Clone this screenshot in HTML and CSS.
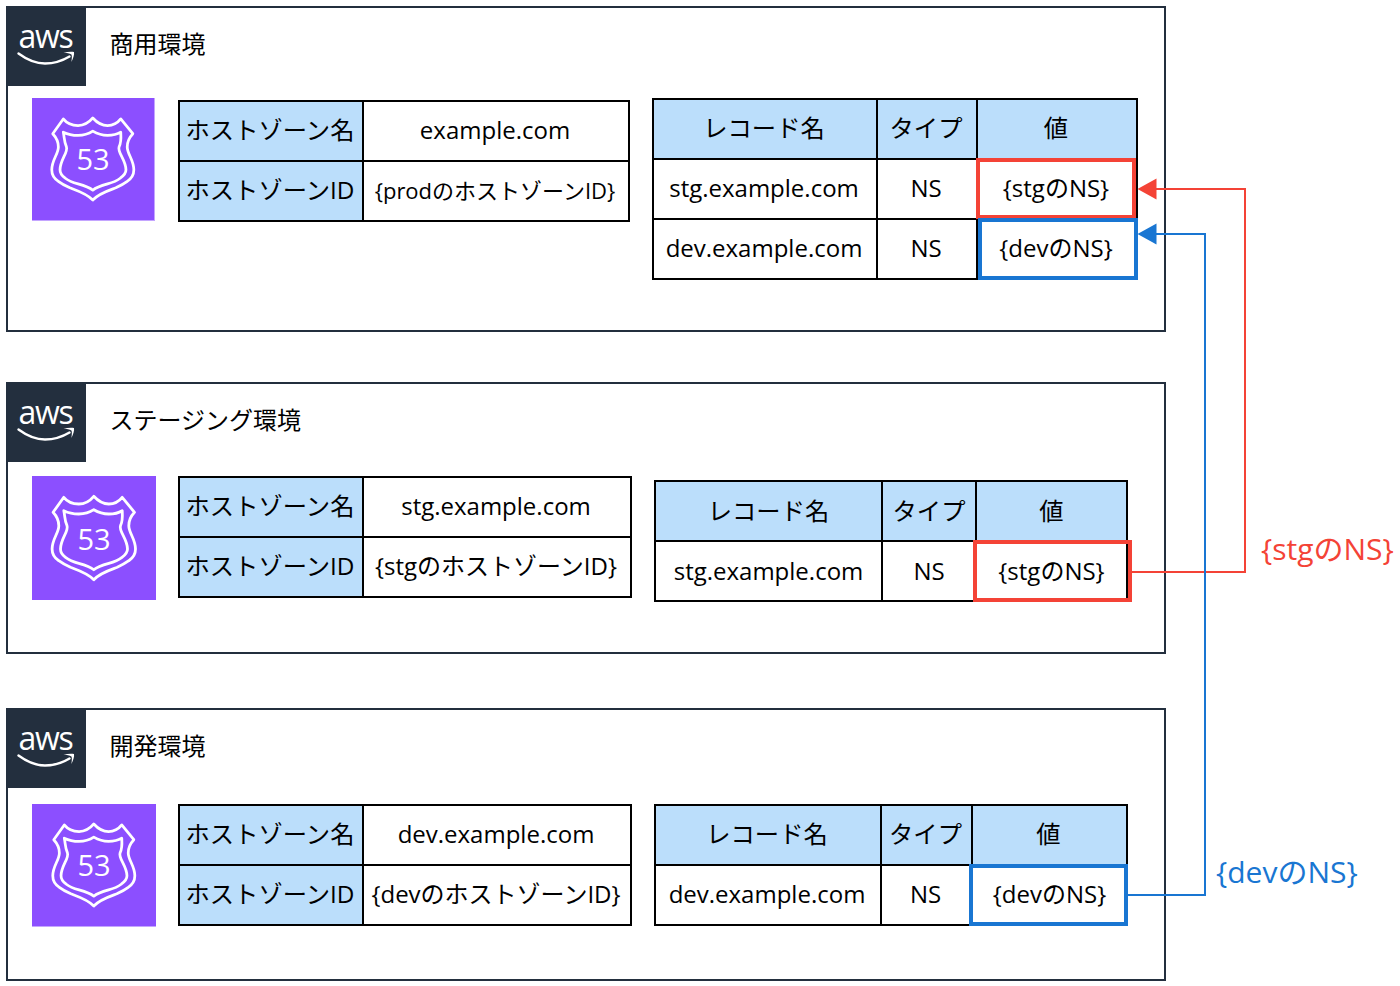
FILE: index.html
```html
<!DOCTYPE html>
<html lang="ja">
<head>
<meta charset="utf-8">
<title>Route 53 NS delegation</title>
<link rel="stylesheet" href="styles.css">
</head>
<body>
<svg width="0" height="0" class="defs">
  <symbol id="aws" viewBox="0 0 80 80">
    <rect width="80" height="80" fill="#232f3e"/>
    <path d="M12.5 47.5C20 53 29 57.5 39 57.5C47 57.5 56 55 63.5 50.5" fill="none" stroke="#fff" stroke-width="2.4" stroke-linecap="round"/>
    <path d="M57.5 46.6C61 45.8 65.5 45.4 68 46C68.6 48.5 67 53 65.4 56C65.8 53 66.2 50 65.4 48.6C64 47.6 60.5 47 57.5 46.6Z" fill="#fff"/>
  </symbol>
  <symbol id="shield" viewBox="0 0 124 124">
    <g fill="none" stroke="#fff" stroke-width="2.8" stroke-linejoin="round" transform="translate(0.5 1)">
      <path d="M31.3 20.3C35 25 41 27 46.3 27C52 27 57 24.5 61.3 19.3C66 24.5 71 27 76.3 27C81.5 27 86 25 89.7 20.3L102 35.3C98.5 39 96.3 44 96.3 48.7C96.3 56 103 62 103 72C103 77 100.5 81 96.3 83.7C92.5 86.5 88.5 88.5 84.7 90.3C76 93.5 67.5 96 61.3 102.7C55 96 46.5 93.5 38 90.3C34 88.5 30 86.5 26.3 83.7C22 81 19.6 77 19.6 72C19.6 62 26.3 56 26.3 48.7C26.3 44 24 39 20.6 35.3Z"/>
      <path d="M31.3 33.7C36 36 41 37 46.3 37C52 37 57 35.5 61.3 32.7C66 35.5 71 37 76.3 37C81.5 37 86 36 89.7 33.7C90 39 90.5 43.5 88 48.7C86 54 95 62 95 72C95 76 92 78.5 89.5 80.3C86 83 81 85 76.3 86.3C70 88 65 89.5 61.3 92.7C57.5 89.5 52.5 88 46.3 86.3C41.5 85 36.5 83 33 80.3C30.5 78.5 28 76 28 72C28 62 36.5 54 34.5 48.7C32 43.5 32.5 39 31.3 33.7Z"/>
    </g>
  </symbol>
</svg>

<main class="canvas">
  <section class="frame f1">
    <header class="head">
      <div class="logo"><svg class="fill"><use href="#aws"/></svg><span class="logo-text">aws</span></div>
      <h2 class="title">商用環境</h2>
    </header>
    <div class="body">
      <div class="icon"><svg class="fill"><use href="#shield"/></svg><span class="num">53</span></div>
      <table class="zone">
        <colgroup><col class="c184"><col class="c266"></colgroup>
        <tr><th>ホストゾーン名</th><td>example.com</td></tr>
        <tr><th>ホストゾーンID</th><td class="id">{prodのホストゾーンID}</td></tr>
      </table>
      <table class="rec">
        <colgroup><col class="c224"><col class="c100"><col class="c160"></colgroup>
        <tr><th>レコード名</th><th>タイプ</th><th>値</th></tr>
        <tr><td>stg.example.com</td><td>NS</td><td class="val">{stgのNS}</td></tr>
        <tr><td>dev.example.com</td><td>NS</td><td class="val">{devのNS}</td></tr>
      </table>
    </div>
  </section>

  <section class="frame f2">
    <header class="head">
      <div class="logo"><svg class="fill"><use href="#aws"/></svg><span class="logo-text">aws</span></div>
      <h2 class="title">ステージング環境</h2>
    </header>
    <div class="body">
      <div class="icon"><svg class="fill"><use href="#shield"/></svg><span class="num">53</span></div>
      <table class="zone">
        <colgroup><col class="c184"><col class="c268"></colgroup>
        <tr><th>ホストゾーン名</th><td>stg.example.com</td></tr>
        <tr><th>ホストゾーンID</th><td>{stgのホストゾーンID}</td></tr>
      </table>
      <table class="rec">
        <colgroup><col class="c227"><col class="c94"><col class="c151"></colgroup>
        <tr><th>レコード名</th><th>タイプ</th><th>値</th></tr>
        <tr><td>stg.example.com</td><td>NS</td><td class="val">{stgのNS}</td></tr>
      </table>
    </div>
  </section>

  <section class="frame f3">
    <header class="head">
      <div class="logo"><svg class="fill"><use href="#aws"/></svg><span class="logo-text">aws</span></div>
      <h2 class="title">開発環境</h2>
    </header>
    <div class="body">
      <div class="icon"><svg class="fill"><use href="#shield"/></svg><span class="num">53</span></div>
      <table class="zone">
        <colgroup><col class="c184"><col class="c268"></colgroup>
        <tr><th>ホストゾーン名</th><td>dev.example.com</td></tr>
        <tr><th>ホストゾーンID</th><td>{devのホストゾーンID}</td></tr>
      </table>
      <table class="rec">
        <colgroup><col class="c226"><col class="c91"><col class="c155"></colgroup>
        <tr><th>レコード名</th><th>タイプ</th><th>値</th></tr>
        <tr><td>dev.example.com</td><td>NS</td><td class="val">{devのNS}</td></tr>
      </table>
    </div>
  </section>

  <svg class="wires" width="1400" height="986" viewBox="0 0 1400 986">
    <path class="wire-red" d="M1131 572H1245V189H1155"/>
    <path class="head-red" d="M1137.5 189L1156.5 178.5V199.5Z"/>
    <path class="wire-blue" d="M1128 895H1205V234H1155"/>
    <path class="head-blue" d="M1137.5 234L1156.5 223.5V244.5Z"/>
  </svg>

  <div class="mark red m1"></div>
  <div class="mark blue m2"></div>
  <div class="mark red m3"></div>
  <div class="mark blue m4"></div>

  <div class="label label-red">{stgのNS}</div>
  <div class="label label-blue">{devのNS}</div>
</main>
</body>
</html>
```
FILE: styles.css
```css
* { box-sizing: border-box; }
html, body { margin: 0; padding: 0; background: #fff; }
body { font-family: "Open Sans", "Noto Sans CJK JP", sans-serif; color: #000; }
.defs { position: absolute; }
.canvas { position: relative; width: 1400px; height: 986px; overflow: hidden; }
.fill { display: block; width: 100%; height: 100%; }

.frame { position: absolute; left: 6px; width: 1160px; border: 2px solid #232f3e; }
.f1 { top: 6px; height: 326px; }
.f2 { top: 382px; height: 272px; }
.f3 { top: 708px; height: 273px; }

.head { display: flex; align-items: center; margin: -2px 0 0 -2px; height: 80px; }
.logo { position: relative; width: 80px; height: 80px; flex: none; }
.logo-text { position: absolute; left: 12.5px; top: 8px; font-size: 32px; font-weight: 500; line-height: 44px; letter-spacing: -1.3px; color: #fff; }
.title { margin: 0 0 4px 23.5px; font-size: 24px; font-weight: 400; line-height: 34px; }

.body { display: flex; align-items: flex-start; padding-left: 24px; }
.icon { position: relative; flex: none; width: 124px; height: 124px; background: #8c4fff; margin-right: 22px; }
.f1 .icon { width: 123px; height: 123px; margin-top: 12px; margin-right: 23px; border-right: 1px solid #c4a5ff; border-bottom: 1px solid #c4a5ff; }
.f2 .icon { margin-top: 14px; }
.f3 .icon { height: 123px; margin-top: 16px; border-bottom: 1px solid #c4a5ff; }
.num { position: absolute; left: 0; right: 0; top: -1px; bottom: 1px; display: flex; align-items: center; justify-content: center; font-size: 29px; line-height: 1; color: #fff; }
.f2 .num { top: 0; bottom: 0; }

table { flex: none; table-layout: fixed; border-collapse: separate; border-spacing: 0; border-top: 2px solid #000; border-left: 2px solid #000; }
th, td { height: 60px; padding: 0 2px 2px 0; border-right: 2px solid #000; border-bottom: 2px solid #000; font-size: 24px; font-weight: 400; text-align: center; white-space: nowrap; vertical-align: middle; line-height: 30px; }
th { background: #bbdefb; font-size: 24.3px; }
.id { font-size: 22px; }
.zone { width: 452px; margin-right: 22px; }
.f1 .zone { margin-top: 14px; }
.f2 .zone, .f3 .zone { width: 454px; margin-top: 14px; }
.f3 .zone { margin-top: 16px; }
.f1 .rec { width: 486px; margin-top: 12px; }
.f2 .rec { width: 474px; margin-top: 18px; }
.f3 .rec { width: 474px; margin-top: 16px; }
.f2 .rec th, .f2 .rec td { padding: 0; }
.f3 .val { padding-right: 0; }

.c91 { width: 91px; } .c94 { width: 94px; } .c100 { width: 100px; }
.c151 { width: 151px; } .c155 { width: 155px; } .c160 { width: 160px; }
.c184 { width: 184px; } .c224 { width: 224px; } .c226 { width: 226px; }
.c227 { width: 227px; } .c266 { width: 266px; } .c268 { width: 268px; }

.wires { position: absolute; left: 0; top: 0; }
.wire-red, .wire-blue { fill: none; stroke-width: 2; }
.wire-red { stroke: #f44336; }
.wire-blue { stroke: #1976d2; }
.head-red { fill: #f44336; }
.head-blue { fill: #1976d2; }

.mark { position: absolute; border: 4px solid; }
.red { border-color: #f44336; }
.blue { border-color: #1976d2; }
.m1 { left: 976px; top: 158px; width: 160px; height: 61px; }
.m2 { left: 978px; top: 218px; width: 160px; height: 62px; }
.m3 { left: 973px; top: 540px; width: 159px; height: 62px; }
.m4 { left: 969px; top: 864px; width: 159px; height: 62px; }

.label { position: absolute; font-size: 30px; line-height: 40px; white-space: nowrap; }
.label-red { left: 1261px; top: 529px; color: #f44336; }
.label-blue { left: 1216px; top: 852px; color: #1976d2; }
```
